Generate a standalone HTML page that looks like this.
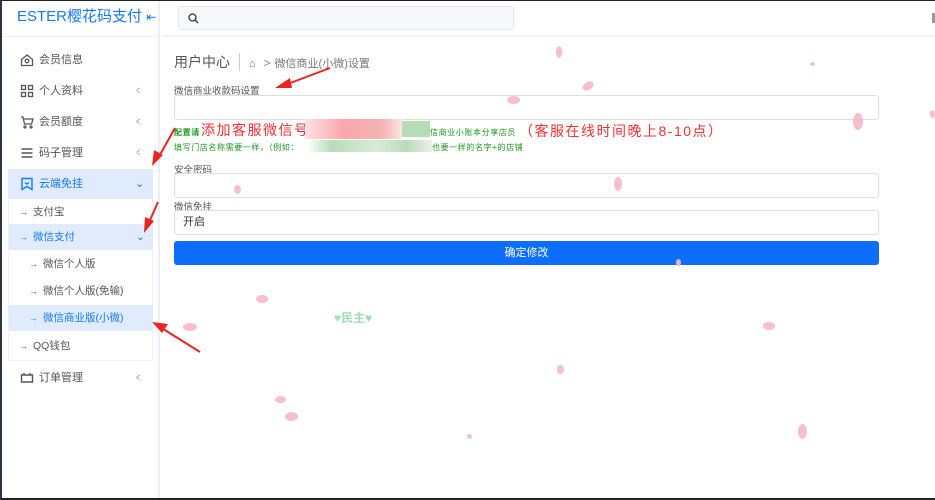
<!DOCTYPE html>
<html><head><meta charset="utf-8"><style>
*{box-sizing:border-box;margin:0;padding:0}
body{width:935px;height:500px;overflow:hidden;font-family:"Liberation Sans","Noto Sans CJK SC",sans-serif;background:#fff;position:relative;color:#555}
.frame{position:absolute;inset:0;border-top:1px solid #222;border-left:2px solid #2b3440;border-bottom:2px solid #222;pointer-events:none;z-index:20}
.side{position:absolute;left:2px;top:1px;width:158px;height:497px;border-right:2px solid #eeeefb;background:#fff}
.logo{height:36px;line-height:32px;padding-left:15px;font-size:15px;color:#1677ff;font-weight:normal;border-bottom:1px solid #eef0fa}
.item{position:absolute;left:6px;width:145px;height:30px;font-size:11px;color:#555;line-height:30px}
.item .ic{position:absolute;left:12px;top:8px;width:14px;height:14px}
.item .t{position:absolute;left:31px}
.item .ar{position:absolute;left:127px;color:#999;font-size:11px;transform:scaleX(.6)}
.sub{position:absolute;left:7px;width:144px;font-size:10.5px;line-height:26px;height:26px}
.sub .a{position:absolute;font-size:9px}
.main{position:absolute;left:162px;top:1px;right:0;height:497px}
.top{height:36px;border-bottom:2px solid #f3f3fd}
.search{position:absolute;left:16px;top:5px;width:336px;height:24px;border:1px solid #e6e8ef;border-radius:3px;background:#f7f8fb}
.crumb{position:absolute;left:12px;top:51px;font-size:14px;color:#555}
label{position:absolute;font-size:9.5px;color:#555}
.inp{position:absolute;left:12px;width:705px;height:25px;border:1px solid #dcdfe6;border-radius:3px;background:#fff}
.btn{position:absolute;left:12px;top:240px;width:705px;height:24px;background:#0d6efd;border-radius:3px;color:#fff;font-size:11px;text-align:center;line-height:24px}
.g{position:absolute;font-size:8px;color:#1a9a1a;letter-spacing:.6px}
.r{position:absolute;font-size:14px;color:#f03030;letter-spacing:1.5px}
.p{position:absolute;background:#f6b8c8;border-radius:50%;opacity:.9}
</style></head><body>
<div class="side">
<div class="logo">ESTER樱花码支付 <span style="font-size:12px">⇤</span></div>
<div class="item" style="top:44px"><svg class="ic" viewBox="0 0 14 14" fill="none" stroke="#555" stroke-width="1.3"><path d="M1.5 6.5L7 2l5.5 4.5V12.5h-11z"/><circle cx="7" cy="8" r="1.8"/></svg><span class="t">会员信息</span></div>
<div class="item" style="top:75px"><svg class="ic" viewBox="0 0 14 14" fill="none" stroke="#555" stroke-width="1.3"><rect x="1.5" y="1.5" width="4" height="4"/><rect x="8.5" y="1.5" width="4" height="4"/><rect x="1.5" y="8.5" width="4" height="4"/><rect x="8.5" y="8.5" width="4" height="4"/></svg><span class="t">个人资料</span><span class="ar">&lt;</span></div>
<div class="item" style="top:106px"><svg class="ic" viewBox="0 0 14 14" fill="none" stroke="#555" stroke-width="1.3"><path d="M1 2h2l1.5 7h7l1.5-5H4"/><circle cx="5" cy="12" r="1"/><circle cx="11" cy="12" r="1"/></svg><span class="t">会员额度</span><span class="ar">&lt;</span></div>
<div class="item" style="top:137px"><svg class="ic" viewBox="0 0 14 14" fill="none" stroke="#555" stroke-width="1.4"><path d="M1.5 3h11M1.5 7h11M1.5 11h11"/></svg><span class="t">码子管理</span><span class="ar">&lt;</span></div>
<div class="item" style="top:168px;background:#e0ecfd;color:#1677ff"><svg class="ic" viewBox="0 0 14 14" fill="none" stroke="#1677ff" stroke-width="1.4"><path d="M2 1.5h10v11L7 9.5 2 12.5z"/><path d="M5 5.5l2 1.5 2-1.5" /></svg><span class="t">云端免挂</span><span class="ar" style="color:#1677ff;transform:none">⌄</span></div>
<div style="position:absolute;left:6px;top:198px;width:145px;height:162px;border:1px solid #eef0f5;border-top:none"></div>
<div class="sub" style="top:198px"><span class="a" style="left:10px">→</span><span style="position:absolute;left:24px">支付宝</span></div>
<div class="sub" style="top:223px;background:#e0ecfd;color:#1677ff"><span class="a" style="left:10px">→</span><span style="position:absolute;left:24px">微信支付</span><span style="position:absolute;left:127px">⌄</span></div>
<div class="sub" style="top:250px;height:27px;line-height:27px"><span class="a" style="left:20px">→</span><span style="position:absolute;left:34px">微信个人版</span></div>
<div class="sub" style="top:277px;height:27px;line-height:27px"><span class="a" style="left:20px">→</span><span style="position:absolute;left:34px">微信个人版(免输)</span></div>
<div class="sub" style="top:304px;height:26px;background:#e0ecfd;color:#1677ff"><span class="a" style="left:20px">→</span><span style="position:absolute;left:34px">微信商业版(小微)</span></div>
<div class="sub" style="top:332px"><span class="a" style="left:10px">→</span><span style="position:absolute;left:24px">QQ钱包</span></div>
<div class="item" style="top:362px"><svg class="ic" viewBox="0 0 14 14" fill="none" stroke="#555" stroke-width="1.4"><path d="M1.5 4h11v7h-11z"/><path d="M4 4V2M10 4V2"/></svg><span class="t">订单管理</span><span class="ar">&lt;</span></div>
</div>
<div class="main">
<div class="top"><div class="search"><svg style="position:absolute;left:9px;top:6px" width="11" height="11" viewBox="0 0 11 11" fill="none" stroke="#333" stroke-width="1.3"><circle cx="4.5" cy="4.5" r="3.5"/><path d="M7 7l3 3"/></svg></div>
<div style="position:absolute;right:0;top:12px;width:3px;height:10px;background:#999"></div></div>
<div class="crumb">用户中心<span style="display:inline-block;width:1px;height:18px;background:#ccc;margin:0 9px;vertical-align:-4px"></span><span style="color:#1677ff;font-size:11px">⌂</span> <span style="color:#888;font-size:12px;margin:0 4px">&gt;</span><span style="font-size:11px;color:#777">微信商业(小微)设置</span></div>
<label style="left:12px;top:82px">微信商业收款码设置</label>
<div class="inp" style="top:94px"></div>
<div class="g" style="left:12px;top:126px;font-weight:bold">配置请</div>
<div class="r" style="left:39px;top:119px">添加客服微信号</div>
<div style="position:absolute;left:143px;top:118px;width:97px;height:20px;background:linear-gradient(90deg,#fde3e6,#f9a7aa 40%,#f6b4b4 80%,#fbe6e6)"></div>
<div style="position:absolute;left:240px;top:120px;width:28px;height:16px;background:#b6dcb6"></div>
<div class="g" style="left:268px;top:126px">信商业小账本分享店员</div>
<div class="r" style="left:357px;top:120px">（客服在线时间晚上8-10点）</div>
<div class="g" style="left:12px;top:141px">填写门店名称需要一样，（例如：</div>
<div style="position:absolute;left:145px;top:139px;width:125px;height:12px;background:linear-gradient(90deg,#fff,#b8dcb8 20%,#d8ecd8 55%,#b8dcb8 80%,#eee)"></div>
<div class="g" style="left:270px;top:141px">也要一样的名字+的店铺</div>
<label style="left:12px;top:161px">安全密码</label>
<div class="inp" style="top:172px"></div>
<label style="left:12px;top:198px">微信免挂</label>
<div class="inp" style="top:209px;font-size:11px;color:#333;line-height:23px;padding-left:8px">开启</div>
<div class="btn">确定修改</div>
<div style="position:absolute;left:172px;top:308px;color:#9fe0b8;font-size:12px;font-weight:bold">♥民主♥</div>
</div>
<div class="p" style="left:556px;top:46px;width:6px;height:12px"></div>
<div class="p" style="left:582px;top:82px;width:12px;height:8px;transform:rotate(-30deg)"></div>
<div class="p" style="left:507px;top:96px;width:13px;height:8px"></div>
<div class="p" style="left:853px;top:113px;width:10px;height:17px"></div>
<div class="p" style="left:614px;top:177px;width:8px;height:14px"></div>
<div class="p" style="left:234px;top:185px;width:7px;height:9px"></div>
<div class="p" style="left:256px;top:295px;width:12px;height:8px"></div>
<div class="p" style="left:183px;top:323px;width:14px;height:8px"></div>
<div class="p" style="left:763px;top:322px;width:12px;height:8px"></div>
<div class="p" style="left:557px;top:365px;width:7px;height:9px"></div>
<div class="p" style="left:275px;top:396px;width:11px;height:7px"></div>
<div class="p" style="left:285px;top:412px;width:13px;height:9px"></div>
<div class="p" style="left:798px;top:424px;width:9px;height:15px"></div>
<div class="p" style="left:467px;top:434px;width:5px;height:5px"></div>
<div class="p" style="left:676px;top:259px;width:5px;height:7px"></div>
<div class="p" style="left:810px;top:62px;width:5px;height:4px"></div>
<div class="p" style="left:930px;top:110px;width:5px;height:8px"></div>
<svg style="position:absolute;left:0;top:0;z-index:10" width="935" height="500">
<g fill="#e8261f" stroke="#e8261f">
<path d="M330 68L285 85" stroke-width="2"/><polygon points="275,88 290,78 292,88" stroke="none"/>
<path d="M175 128L157 160" stroke-width="2"/><polygon points="152,166 154,150 163,155" stroke="none"/>
<path d="M158 202L147 227" stroke-width="2"/><polygon points="144,233 145,217 154,221" stroke="none"/>
<path d="M200 352L160 327" stroke-width="2"/><polygon points="152,322 168,324 162,333" stroke="none"/>
</g></svg>
<div class="frame"></div>
</body></html>
